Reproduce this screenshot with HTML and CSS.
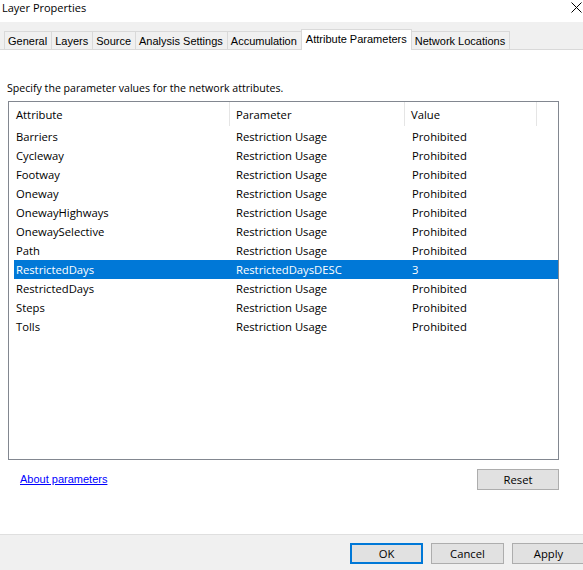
FILE: index.html
```html
<!DOCTYPE html>
<html>
<head>
<meta charset="utf-8">
<link rel="stylesheet" href="styles.css">
</head>
<body>
<div class="window">
  <div class="titlebar">
    <span class="title">Layer Properties</span>
    <svg class="close" width="11" height="11" viewBox="0 0 11 11"><path d="M0.5 0.5L10.5 10.5M10.5 0.5L0.5 10.5" stroke="#000" stroke-width="1" fill="none"/></svg>
  </div>
  <div class="tabstrip">
    <div class="tab">General</div>
    <div class="tab">Layers</div>
    <div class="tab">Source</div>
    <div class="tab">Analysis Settings</div>
    <div class="tab">Accumulation</div>
    <div class="tab active">Attribute Parameters</div>
    <div class="tab">Network Locations</div>
  </div>
  <div class="panel">
    <p class="intro">Specify the parameter values for the network attributes.</p>
    <div class="listview">
      <div class="lv-header">
        <div class="hcol c-attr">Attribute</div>
        <div class="hcol c-param">Parameter</div>
        <div class="hcol c-val">Value</div>
      </div>
      <div class="lv-body">
        <div class="row"><span>Barriers</span><span>Restriction Usage</span><span>Prohibited</span></div>
        <div class="row"><span>Cycleway</span><span>Restriction Usage</span><span>Prohibited</span></div>
        <div class="row"><span>Footway</span><span>Restriction Usage</span><span>Prohibited</span></div>
        <div class="row"><span>Oneway</span><span>Restriction Usage</span><span>Prohibited</span></div>
        <div class="row"><span>OnewayHighways</span><span>Restriction Usage</span><span>Prohibited</span></div>
        <div class="row"><span>OnewaySelective</span><span>Restriction Usage</span><span>Prohibited</span></div>
        <div class="row"><span>Path</span><span>Restriction Usage</span><span>Prohibited</span></div>
        <div class="row selected"><span>RestrictedDays</span><span>RestrictedDaysDESC</span><span>3</span></div>
        <div class="row"><span>RestrictedDays</span><span>Restriction Usage</span><span>Prohibited</span></div>
        <div class="row"><span>Steps</span><span>Restriction Usage</span><span>Prohibited</span></div>
        <div class="row"><span>Tolls</span><span>Restriction Usage</span><span>Prohibited</span></div>
      </div>
    </div>
    <div class="below">
      <a class="link" href="#">About parameters</a>
      <button class="btn reset">Reset</button>
    </div>
  </div>
  <div class="footer">
    <button class="btn default">OK</button>
    <button class="btn">Cancel</button>
    <button class="btn last">Apply</button>
  </div>
</div>
</body>
</html>
```

FILE: styles.css
```css
html, body {
  margin: 0;
  padding: 0;
  background: #fff;
}
body {
  width: 583px;
  height: 570px;
  overflow: hidden;
  font-family: "Open Sans", "Noto Sans", sans-serif;
  font-size: 11.25px;
  color: #000;
}
.window {
  display: flex;
  flex-direction: column;
  width: 583px;
  height: 570px;
}
.titlebar {
  height: 22px;
  display: flex;
  justify-content: space-between;
  align-items: flex-start;
  background: #fff;
}
.title {
  padding-left: 2px;
  line-height: 16px;
  font-size: 11px;
}
.close {
  margin-top: 2px;
  margin-right: 1px;
}
.tabstrip {
  height: 28px;
  box-sizing: border-box;
  background: #f0f0f0;
  border-bottom: 1px solid #d9d9d9;
  display: flex;
  align-items: flex-end;
  padding-left: 4px;
  font-family: "Liberation Sans", Arial, sans-serif;
  font-size: 11px;
}
.tab {
  height: 18px;
  box-sizing: border-box;
  border: 1px solid #d9d9d9;
  border-bottom: none;
  margin-left: -1px;
  padding: 0 4px 0 3px;
  line-height: 18px;
  background: #f0f0f0;
}
.tab:first-child {
  margin-left: 0;
}
.tab.active {
  height: 21px;
  margin-bottom: -1px;
  background: #fff;
  line-height: 18px;
  padding: 0 4px;
  position: relative;
  z-index: 1;
}
.panel {
  flex: 1;
  background: #fff;
  padding-top: 30px;
  display: flex;
  flex-direction: column;
}
.intro {
  margin: 0 0 5px 7px;
  line-height: 16px;
  font-size: 10.6px;
}
.listview {
  margin-left: 8px;
  width: 551px;
  height: 359px;
  box-sizing: border-box;
  border: 1px solid #828790;
  background: #fff;
}
.lv-header {
  display: grid;
  grid-template-columns: 221px 175px 132px;
  height: 24px;
}
.hcol {
  border-right: 1px solid #e5e5e5;
  box-sizing: border-box;
  height: 24px;
  padding-top: 2px;
  line-height: 22px;
}
.c-attr { padding-left: 7px; }
.c-param { padding-left: 6px; }
.c-val { padding-left: 6px; }
.lv-body {
  padding: 1px 0 0 5px;
}
.row {
  display: grid;
  grid-template-columns: 216px 175px 132px;
  height: 19px;
  box-sizing: border-box;
  padding-top: 1px;
  line-height: 18px;
}
.row span:nth-child(1) { padding-left: 2px; }
.row span:nth-child(2) { padding-left: 6px; }
.row span:nth-child(3) { padding-left: 7px; }
.row.selected {
  background: #0078d7;
  color: #fff;
}
.below {
  display: flex;
  align-items: center;
  margin-top: 9px;
  padding: 0 24px 0 20px;
}
.link {
  font-family: "Liberation Sans", Arial, sans-serif;
  font-size: 11px;
  color: #0000ff;
  text-decoration: underline;
  margin-bottom: 2px;
}
.btn {
  font-family: "Open Sans", "Noto Sans", sans-serif;
  font-size: 11.25px;
  color: #000;
  background: #e1e1e1;
  border: 1px solid #adadad;
  height: 21px;
  width: 73px;
  padding: 0;
  box-sizing: border-box;
  border-radius: 0;
}
.reset {
  margin-left: auto;
  width: 82px;
}
.footer {
  height: 36px;
  box-sizing: border-box;
  border-top: 1px solid #dfdfdf;
  background: #f0f0f0;
  display: flex;
  justify-content: flex-end;
  align-items: flex-start;
  padding-top: 8px;
  gap: 8px;
}
.btn.last {
  margin-right: -2px;
  flex-shrink: 0;
}
.btn.default {
  border: 2px solid #0078d7;
}
```
